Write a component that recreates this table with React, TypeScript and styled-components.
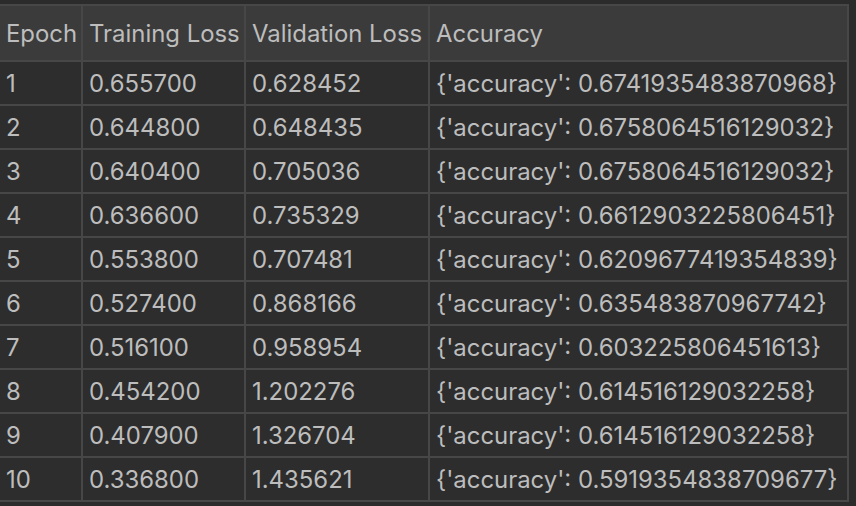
import React from "react";
import styled, { createGlobalStyle } from "styled-components";

const Global = createGlobalStyle`
  html, body { margin: 0; padding: 0; background: #2b2b2b; }
  body { font-family: Inter, "Liberation Sans", sans-serif; }
`;

const Frame = styled.div`
  padding-top: 4px;
  margin-left: -2px;
`;

const Table = styled.table`
  border-collapse: collapse;
  color: #bdbdbd;
  font-size: 23.9px;
  table-layout: fixed;
`;

const Head = styled.th<{ $w: number }>`
  width: ${(p) => p.$w}px;
  height: 56px;
  padding: 0 0 0 6px;
  box-sizing: border-box;
  text-align: left;
  font-weight: 400;
  background: #3b3b3b;
  border: 2px solid #474747;
  white-space: nowrap;
`;

const Cell = styled.td`
  height: 44px;
  padding: 0 0 0 6px;
  box-sizing: border-box;
  background: #2d2d2d;
  border: 2px solid #474747;
  white-space: nowrap;
`;

const rows: [string, string, string, string][] = [
  ["1", "0.655700", "0.628452", "0.6741935483870968"],
  ["2", "0.644800", "0.648435", "0.6758064516129032"],
  ["3", "0.640400", "0.705036", "0.6758064516129032"],
  ["4", "0.636600", "0.735329", "0.6612903225806451"],
  ["5", "0.553800", "0.707481", "0.6209677419354839"],
  ["6", "0.527400", "0.868166", "0.635483870967742"],
  ["7", "0.516100", "0.958954", "0.603225806451613"],
  ["8", "0.454200", "1.202276", "0.614516129032258"],
  ["9", "0.407900", "1.326704", "0.614516129032258"],
  ["10", "0.336800", "1.435621", "0.5919354838709677"],
];

export default function App() {
  return (
    <>
      <Global />
      <Frame>
        <Table>
          <thead>
            <tr>
              <Head $w={83}>Epoch</Head>
              <Head $w={163}>Training Loss</Head>
              <Head $w={184}>Validation Loss</Head>
              <Head $w={419}>Accuracy</Head>
            </tr>
          </thead>
          <tbody>
            {rows.map((r) => (
              <tr key={r[0]}>
                <Cell>{r[0]}</Cell>
                <Cell>{r[1]}</Cell>
                <Cell>{r[2]}</Cell>
                <Cell>{`{'accuracy': ${r[3]}}`}</Cell>
              </tr>
            ))}
          </tbody>
        </Table>
      </Frame>
    </>
  );
}
